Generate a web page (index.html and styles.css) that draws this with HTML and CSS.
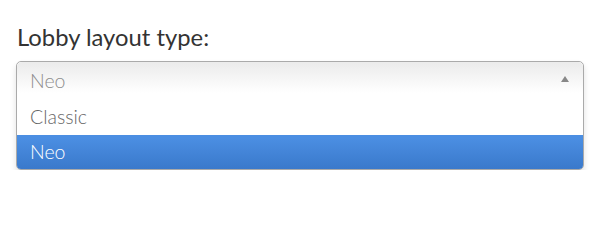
FILE: index.html
```html
<!DOCTYPE html>
<html>
<head>
<meta charset="utf-8">
<link rel="stylesheet" href="styles.css">
</head>
<body>
<div class="field">
  <label class="field-label">Lobby layout type:</label>
  <div class="chosen">
    <div class="chosen-single">
      <span class="chosen-value">Neo</span>
      <span class="chosen-arrow"></span>
    </div>
    <ul class="chosen-results">
      <li class="chosen-option">Classic</li>
      <li class="chosen-option is-highlighted">Neo</li>
    </ul>
  </div>
</div>
</body>
</html>
```
FILE: styles.css
```css
html, body {
  margin: 0;
  padding: 0;
  background: #fff;
}
body {
  font-family: Lato, "Open Sans", sans-serif;
}
.field {
  padding: 22px 16px 0 16px;
}
.field-label {
  display: block;
  font-size: 23.8px;
  line-height: 30px;
  color: #333;
  margin: 0 0 9px 1px;
}
.chosen {
  position: relative;
  border: 1px solid #aaa;
  border-radius: 5px;
  box-shadow: 0 4px 6px rgba(0,0,0,0.12);
  background: #fff;
  width: 566px;
}
.chosen-single {
  display: flex;
  align-items: center;
  justify-content: space-between;
  height: 36px;
  padding: 0 14px 0 13px;
  border-radius: 5px 5px 0 0;
  background: linear-gradient(#ececec 5%, #fff 85%);
}
.chosen-value {
  font-size: 19.5px;
  font-weight: 300;
  color: #8d8d8d;
}
.chosen-arrow {
  width: 0;
  height: 0;
  border-left: 4px solid transparent;
  border-right: 4px solid transparent;
  border-bottom: 6px solid #888;
  margin-bottom: 2px;
}
.chosen-results {
  list-style: none;
  margin: 0;
  padding: 0;
}
.chosen-option {
  height: 37px;
  line-height: 37px;
  padding: 0 13px;
  font-size: 19.5px;
  font-weight: 300;
  color: #666;
}
.chosen-option.is-highlighted {
  height: 34px;
  line-height: 34px;
  color: #fff;
  background: linear-gradient(#4b8ee2 10%, #3a79cb 100%);
  border-radius: 0 0 4px 4px;
}
```
